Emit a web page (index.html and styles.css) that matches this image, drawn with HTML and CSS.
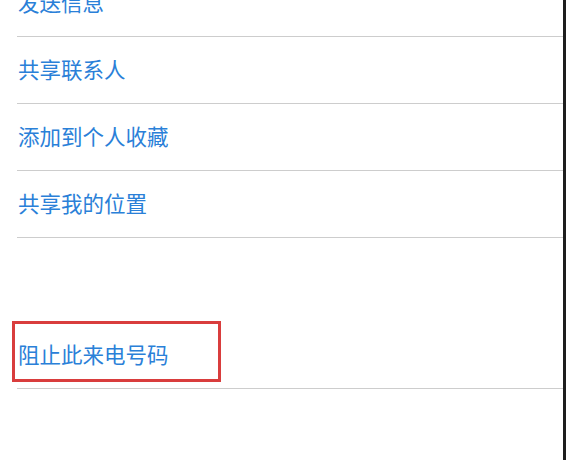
FILE: index.html
```html
<!DOCTYPE html>
<html lang="zh-CN">
<head>
    <meta charset="UTF-8">
    <title>联系人操作</title>
    <link rel="stylesheet" href="styles.css">
</head>
<body>
    <div class="screen">
        <ul class="actions">
            <li class="first"><span>发送信息</span></li>
            <li><span>共享联系人</span></li>
            <li><span>添加到个人收藏</span></li>
            <li><span>共享我的位置</span></li>
        </ul>
        <div class="gap"></div>
        <ul class="actions">
            <li class="marked"><span>阻止此来电号码</span><div class="mark"></div></li>
        </ul>
    </div>
</body>
</html>
```
FILE: styles.css
```css
*{
    margin:0;
    padding:0;
}
html,body{
    height:100%;
    background:#fff;
    overflow:hidden;
}
.screen{
    display:flow-root;
    height:100%;
    border-right:3px solid #1e1e1e;
    background:#fff;
}
.actions{
    list-style:none;
    padding-left:17px;
}
.actions li{
    height:66px;
    border-bottom:1px solid #cdcdcd;
    display:flex;
    align-items:center;
    padding-left:1px;
    font-family:"Noto Sans CJK SC","Noto Sans",sans-serif;
    font-size:21.5px;
    color:#2a80d8;
}
.actions li span{
    position:relative;
    top:-2px;
}
.actions .first{
    margin-top:-30px;
}
.gap{
    height:84px;
}
.actions .marked{
    position:relative;
}
.marked span{
    top:0;
}
.mark{
    position:absolute;
    left:-5px;
    top:-1px;
    width:203px;
    height:55px;
    border:3px solid #d93d3d;
}
```
